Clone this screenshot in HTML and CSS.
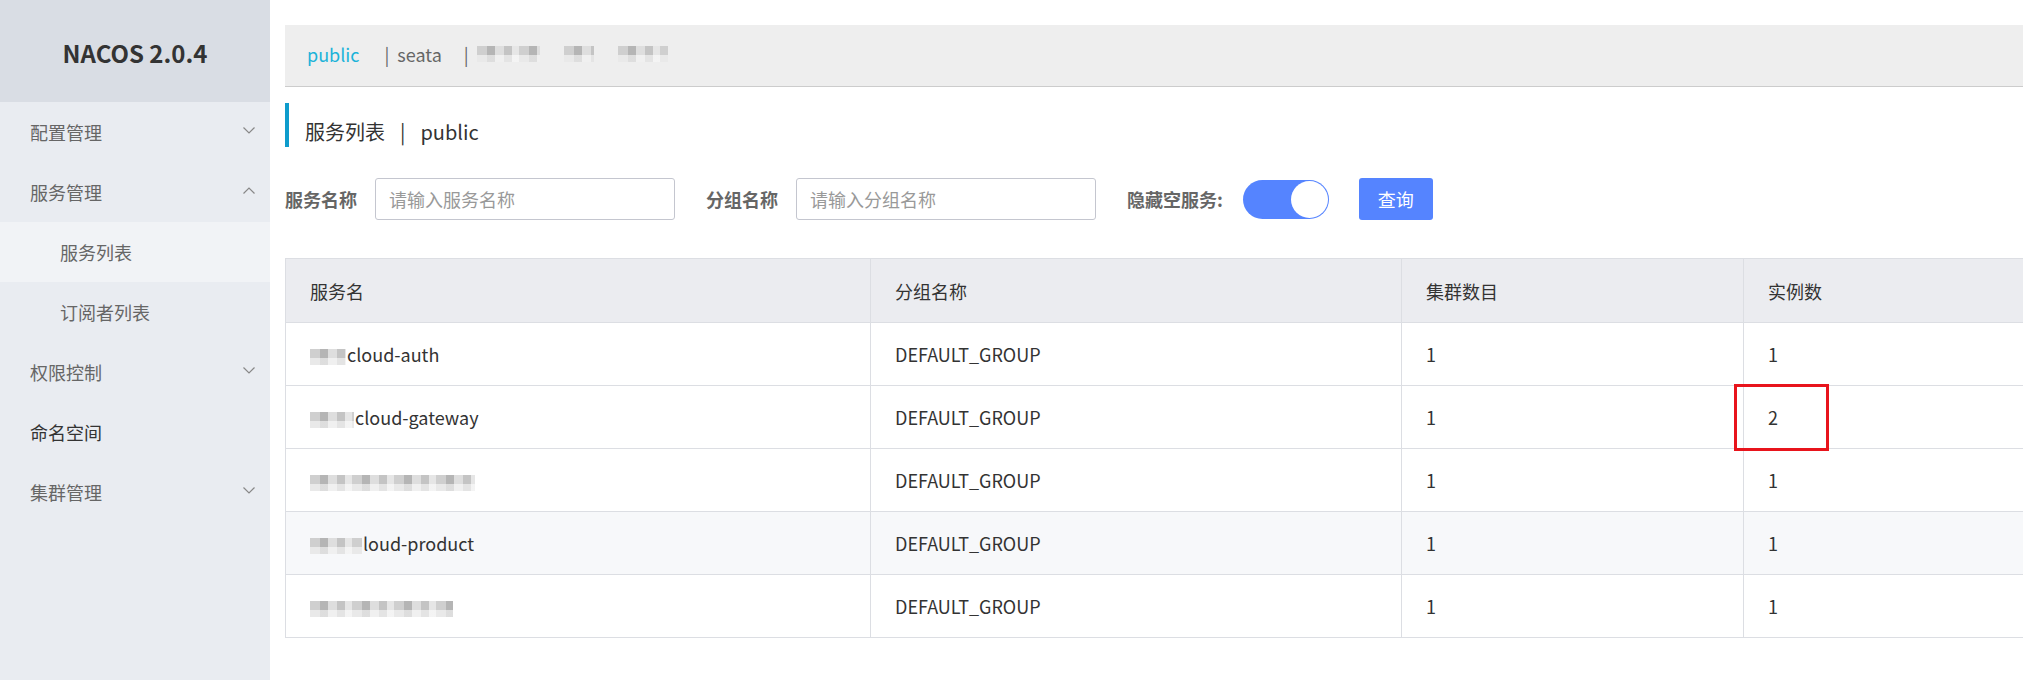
FILE: index.html
```html
<!DOCTYPE html>
<html lang="zh-CN">
<head>
<meta charset="utf-8">
<title>Nacos</title>
<link rel="stylesheet" href="styles.css">
</head>
<body>
<div class="app">
  <aside class="sidebar">
    <div class="logo">NACOS 2.0.4</div>
    <ul class="menu">
      <li class="item"><span>配置管理</span><svg class="chev" viewBox="0 0 12 7"><path d="M0.5 0.5 L6 6 L11.5 0.5"/></svg></li>
      <li class="item"><span>服务管理</span><svg class="chev" viewBox="0 0 12 7"><path d="M0.5 6.5 L6 1 L11.5 6.5"/></svg></li>
      <li class="item sub active"><span>服务列表</span></li>
      <li class="item sub"><span>订阅者列表</span></li>
      <li class="item"><span>权限控制</span><svg class="chev" viewBox="0 0 12 7"><path d="M0.5 0.5 L6 6 L11.5 0.5"/></svg></li>
      <li class="item dark"><span>命名空间</span></li>
      <li class="item"><span>集群管理</span><svg class="chev" viewBox="0 0 12 7"><path d="M0.5 0.5 L6 6 L11.5 0.5"/></svg></li>
    </ul>
  </aside>
  <main class="main">
    <div class="nsbar">
      <span class="ns current">public</span>
      <span class="ns"><span class="sep">|</span>seata</span>
      <span class="ns"><span class="sep">|</span><span class="blur b63"></span><span class="blur b30 gap"></span><span class="blur b50 gap"></span></span>
    </div>
    <div class="title">
      <span>服务列表</span><span class="tsep">|</span><span>public</span>
    </div>
    <div class="search">
      <label class="lbl">服务名称</label>
      <input class="inp" type="text" placeholder="请输入服务名称">
      <label class="lbl">分组名称</label>
      <input class="inp" type="text" placeholder="请输入分组名称">
      <label class="lbl">隐藏空服务:</label>
      <span class="switch"><span class="knob"></span></span>
      <button class="btn">查询</button>
    </div>
    <table class="grid">
      <colgroup>
        <col class="c1"><col class="c2"><col class="c3"><col class="c4">
      </colgroup>
      <thead>
        <tr><th>服务名</th><th>分组名称</th><th>集群数目</th><th>实例数</th></tr>
      </thead>
      <tbody>
        <tr><td><span class="blur b36"></span>cloud-auth</td><td>DEFAULT_GROUP</td><td>1</td><td>1</td></tr>
        <tr><td><span class="blur b44"></span>cloud-gateway</td><td>DEFAULT_GROUP</td><td>1</td><td><span class="mark">2<span class="redbox"></span></span></td></tr>
        <tr><td><span class="blur b165"></span></td><td>DEFAULT_GROUP</td><td>1</td><td>1</td></tr>
        <tr class="stripe"><td><span class="blur b52"></span>loud-product</td><td>DEFAULT_GROUP</td><td>1</td><td>1</td></tr>
        <tr><td><span class="blur b143"></span></td><td>DEFAULT_GROUP</td><td>1</td><td>1</td></tr>
      </tbody>
    </table>
  </main>
</div>
</body>
</html>
```
FILE: styles.css
```css
* { box-sizing: border-box; }
html, body {
  margin: 0;
  padding: 0;
  height: 680px;
  overflow: hidden;
  background: #fff;
  font-family: "Noto Sans CJK SC", "Noto Sans", sans-serif;
  color: #333;
}
.app {
  display: flex;
  height: 680px;
}
.sidebar {
  width: 270px;
  flex: 0 0 270px;
  background: #e9ecf1;
  height: 100%;
}
.logo {
  height: 102px;
  background: #d9dde4;
  display: flex;
  align-items: center;
  justify-content: center;
  font-size: 24px;
  font-weight: 700;
  color: #333;
  padding-top: 2px;
}
.menu {
  list-style: none;
  margin: 0;
  padding: 0;
}
.item {
  height: 60px;
  display: flex;
  align-items: center;
  justify-content: space-between;
  padding: 0 15px 0 30px;
  font-size: 18px;
  color: #666;
}
.item.sub { padding-left: 60px; }
.item.active { background: #f1f3f6; }
.item.dark { color: #333; }
.chev {
  width: 12px;
  height: 7px;
  fill: none;
  stroke: #888;
  stroke-width: 1.2;
  margin-top: -4px;
}
.main {
  flex: 1;
  min-width: 0;
  padding: 25px 0 0 15px;
  overflow: hidden;
}
.nsbar {
  height: 62px;
  background: #eeeeee;
  border-bottom: 1px solid #cccccc;
  display: flex;
  align-items: center;
  padding-left: 22px;
  padding-bottom: 4px;
  font-size: 18px;
  color: #666;
}
.ns { display: inline-flex; align-items: center; margin-right: 22px; }
.ns.current { color: #1cb3d9; margin-right: 25px; }
.sep { margin-right: 8px; }
.blur {
  display: inline-block;
  height: 16px;
  vertical-align: middle;
  background:
    linear-gradient(180deg, rgba(255,255,255,0) 0 55%, rgba(255,255,255,0.55) 55% 100%),
    repeating-linear-gradient(90deg, #cfcfcf 0 10px, #b5b5b5 10px 18px, #dedede 18px 27px, #c4c4c4 27px 35px, #e6e6e6 35px 42px);
}
.blur.gap { margin-left: 24px; }
.b30 { width: 30px; }
.b36 { width: 36px; }
.b44 { width: 44px; }
.b50 { width: 50px; }
.b52 { width: 52px; }
.b63 { width: 63px; }
.b143 { width: 143px; }
.b165 { width: 165px; }
.title {
  margin-top: 16px;
  height: 44px;
  border-left: 4px solid #0e9ccc;
  display: flex;
  align-items: center;
  padding-left: 16px;
  padding-top: 13px;
  font-size: 20px;
  color: #333;
}
.tsep { margin: 0 15px; }
.search {
  margin-top: 31px;
  height: 42px;
  display: flex;
  align-items: center;
}
.lbl {
  font-size: 18px;
  font-weight: 700;
  color: #666;
  margin-right: 18px;
}
.inp {
  width: 300px;
  height: 42px;
  border: 1px solid #c4c6cf;
  border-radius: 3px;
  padding: 0 13px;
  font-family: inherit;
  font-size: 18px;
  color: #333;
  margin-right: 31px;
  outline: none;
}
.inp::placeholder { color: #999; }
.search .lbl:nth-of-type(3) { margin-right: 20px; }
.switch {
  width: 86px;
  height: 39px;
  border-radius: 20px;
  background: #5584ff;
  display: flex;
  align-items: center;
  justify-content: flex-end;
  padding-right: 1px;
  margin-right: 30px;
}
.knob {
  width: 37px;
  height: 37px;
  border-radius: 50%;
  background: #fff;
}
.btn {
  width: 74px;
  height: 42px;
  border: none;
  border-radius: 3px;
  background: #5584ff;
  color: #fff;
  font-family: inherit;
  font-size: 18px;
  padding: 0;
}
.grid {
  margin-top: 38px;
  border-collapse: collapse;
  table-layout: fixed;
  width: 1900px;
  font-size: 18px;
  color: #333;
}
.c1 { width: 585px; }
.c2 { width: 531px; }
.c3 { width: 342px; }
.c4 { width: 442px; }
.grid th, .grid td {
  height: 63px;
  padding: 0 24px;
  text-align: left;
  font-weight: 400;
  border: 1px solid #dcdee3;
  white-space: nowrap;
}
.grid tr > :last-child { border-right: none; }
.grid thead th { background: #ebecf0; height: 64px; }
.grid tr.stripe td { background: #f7f8fa; }
.grid td .blur { margin-right: 1px; }
.mark { position: relative; display: inline-block; }
.redbox {
  position: absolute;
  left: -34px;
  top: -20px;
  width: 95px;
  height: 67px;
  border: 3px solid #e8141c;
}
```
